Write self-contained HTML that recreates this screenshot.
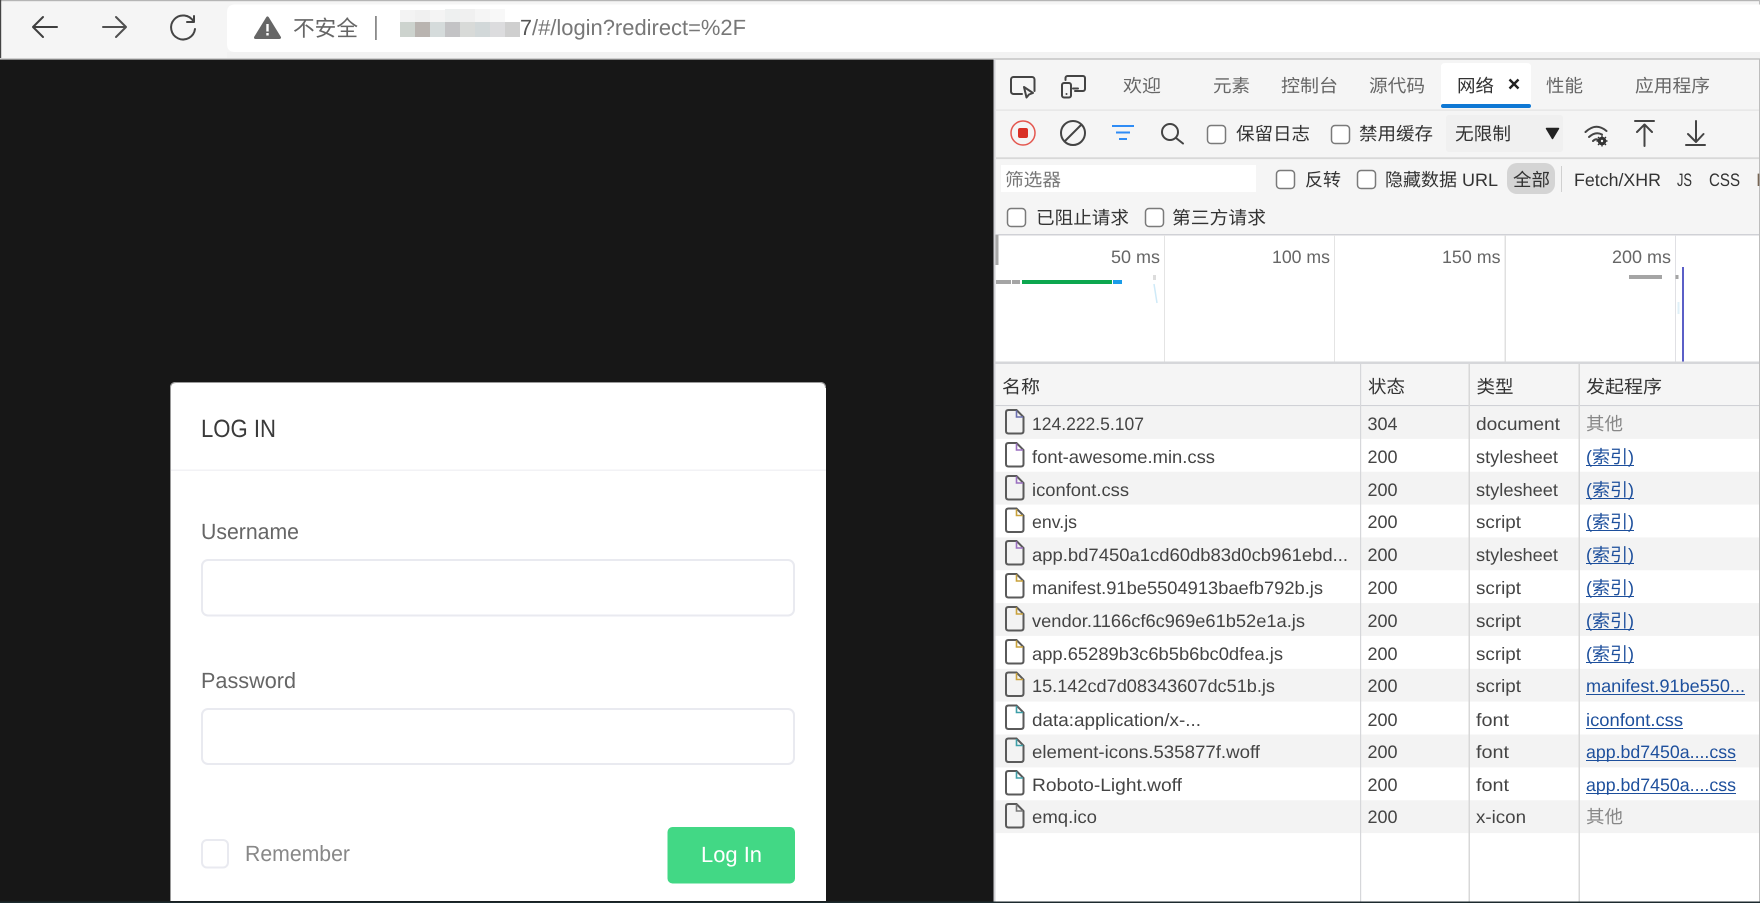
<!DOCTYPE html>
<html lang="zh">
<head>
<meta charset="utf-8">
<title>Login</title>
<style>
html,body{margin:0;padding:0;width:1760px;height:903px;overflow:hidden;background:#171717}
svg{display:block;filter:blur(.35px)}
text{font-family:"Liberation Sans","Noto Sans CJK SC",sans-serif;font-size:18px;fill:#444;text-rendering:geometricPrecision}
.t{fill:#666}
.d{fill:#333}
.g{fill:#777}
.l{fill:#1d4f9c}
.ic{fill:none;stroke:#444;stroke-width:2;stroke-linecap:round;stroke-linejoin:round}
.cb{fill:#fff;stroke:#7a7a7a;stroke-width:1.5}
.r{fill:#f3f3f3}
.v{fill:#d6d7da}
</style>
</head>
<body>
<svg width="1760" height="903" viewBox="0 0 1760 903" xmlns="http://www.w3.org/2000/svg">
<defs>
<path id="doc" d="M3.5 1H11.5L18.5 8V22Q18.5 24.5 16 24.5H3.5Q1 24.5 1 22V3.5Q1 1 3.5 1Z" fill="none" stroke="#5a5a5a" stroke-width="2"/>
<path id="fold" d="M11.5 1.5V8H18" fill="none" stroke-width="1.6"/>
</defs>

<!-- Page background -->
<rect width="1760" height="903" fill="#171717"/>

<!-- Browser bar -->
<rect x="0" y="0" width="1760" height="59" fill="#f5f5f5"/>
<rect x="0" y="0" width="1760" height="1.2" fill="#b5b5b5"/>
<rect x="0" y="0" width="1.2" height="59" fill="#444"/>
<rect x="1759" y="0" width="1" height="903" fill="#bdbdbd"/>
<path d="M235 4.5H1760V52H235Q227 52 227 44V12.5Q227 4.5 235 4.5Z" fill="#fff"/>
<rect x="227" y="52" width="1533" height="6" fill="#f2f2f2"/>
<rect x="0" y="58" width="1760" height="1.6" fill="#cfcfcf"/>

<path d="M57 27H33M43 17L33 27L43 37" fill="none" stroke="#3f3f3f" stroke-width="2" stroke-linecap="round" stroke-linejoin="round"/>
<path d="M103 27H126M116 17L126 27L116 37" fill="none" stroke="#505050" stroke-width="2" stroke-linecap="round" stroke-linejoin="round"/>
<path d="M193.5 21.5A12 12 0 1 0 195 29M194 16V22H187" fill="none" stroke="#444" stroke-width="2" stroke-linecap="round" stroke-linejoin="round"/>

<path d="M267.500 18L279.500 37.500H255.500Z" fill="#666" stroke="#666" stroke-width="3" stroke-linejoin="round"/>
<rect x="266.300" y="24" width="2.400" height="7.500" fill="#fff"/>
<rect x="266.300" y="33" width="2.400" height="2.500" fill="#fff"/>
<text x="293" y="36" style="font-size:22px" class="t" textLength="65" lengthAdjust="spacingAndGlyphs">不安全</text>
<rect x="375" y="16" width="1.800" height="24" fill="#8a8a8a"/>

<!-- Mosaic -->
<rect x="400" y="10" width="15" height="12" fill="#f3f3f3"/>
<rect x="415" y="10" width="15" height="12" fill="#f0f0f0"/>
<rect x="430" y="10" width="15" height="12" fill="#f4f4f4"/>
<rect x="445" y="9" width="15" height="13" fill="#eef0f0"/>
<rect x="460" y="9" width="15" height="13" fill="#f0f0f0"/>
<rect x="475" y="9" width="15" height="13" fill="#f5f5f5"/>
<rect x="490" y="9" width="15" height="13" fill="#f8f8f8"/>
<rect x="400" y="22" width="15" height="15" fill="#cdd3ce"/>
<rect x="415" y="22" width="15" height="15" fill="#b9b4b0"/>
<rect x="430" y="22" width="15" height="15" fill="#d5dbdb"/>
<rect x="445" y="22" width="15" height="15" fill="#c3c3c5"/>
<rect x="460" y="22" width="15" height="15" fill="#d8dad8"/>
<rect x="475" y="22" width="15" height="15" fill="#d2d8d9"/>
<rect x="490" y="22" width="15" height="15" fill="#dcdcde"/>
<rect x="505" y="22" width="15" height="15" fill="#cfcfcf"/>

<text x="520" y="35" style="font-size:22px;fill:#555" textLength="12" lengthAdjust="spacingAndGlyphs">7</text>
<text x="532" y="35" style="font-size:22px" class="g" textLength="214" lengthAdjust="spacingAndGlyphs">/#/login?redirect=%2F</text>

<!-- Login card -->
<path d="M176 382H820Q826 382 826 388V901H170V388Q170 382 176 382Z" fill="#fff"/>
<path d="M170.500 901V388Q170.500 382.500 176 382.500H820Q825.500 382.500 825.500 388" fill="none" stroke="#9a9a9a" stroke-width="1"/>
<rect x="171" y="469.500" width="655" height="1.500" fill="#f2f2f5"/>
<text x="201" y="437" style="font-size:25px;fill:#3a3a3a" textLength="75" lengthAdjust="spacingAndGlyphs">LOG IN</text>
<text x="201" y="539" style="font-size:22px" class="t" textLength="98" lengthAdjust="spacingAndGlyphs">Username</text>
<rect x="202" y="560" width="592" height="55.500" rx="6" fill="#fff" stroke="#e9eaf0" stroke-width="2"/>
<text x="201" y="688" style="font-size:22px" class="t" textLength="95" lengthAdjust="spacingAndGlyphs">Password</text>
<rect x="202" y="709" width="592" height="55" rx="6" fill="#fff" stroke="#e9eaf0" stroke-width="2"/>
<rect x="202" y="840" width="26" height="27.500" rx="5" fill="#fff" stroke="#e9eaf0" stroke-width="2"/>
<text x="245" y="861" style="font-size:22px;fill:#888" textLength="105" lengthAdjust="spacingAndGlyphs">Remember</text>
<rect x="667.500" y="827" width="127.500" height="56.500" rx="5" fill="#42d885"/>
<text x="701" y="862" style="font-size:22px;fill:#fff" textLength="61" lengthAdjust="spacingAndGlyphs">Log In</text>

<!-- DevTools panel -->
<rect x="994" y="59.600" width="766" height="843" fill="#f5f5f5"/>
<rect x="993.500" y="59" width="2" height="844" fill="#d2d2d6"/>
<rect x="1759" y="59" width="1" height="844" fill="#bdbdbd"/>

<!-- Tabs -->
<rect x="996" y="109.500" width="763" height="1.200" fill="#e2e2e2"/>
<path d="M1445 63H1527Q1531 63 1531 67V108H1441V67Q1441 63 1445 63Z" fill="#fff"/>
<rect x="1441" y="104" width="90" height="4" rx="2" fill="#0f78d4"/>

<path d="M1022 94H1013.500A2.500 2.500 0 0 1 1011 91.500V79.500A2.500 2.500 0 0 1 1013.500 77H1032A2.500 2.500 0 0 1 1034.500 79.500V91" class="ic"/>
<path d="M1024 87L1033 93L1029 94.500L1026.500 97.500Z" class="ic"/>
<path d="M1065.500 80V78A2 2 0 0 1 1067.500 76H1083A2 2 0 0 1 1085 78V89A2 2 0 0 1 1083 91H1075" class="ic"/>
<rect x="1062" y="83" width="9" height="14.500" rx="2" class="ic"/>
<circle cx="1066.500" cy="94" r="1" fill="#444"/>
<path d="M1073 88.500H1078" class="ic"/>

<text x="1123" y="92" class="t" textLength="38" lengthAdjust="spacingAndGlyphs">欢迎</text>
<text x="1213" y="92" class="t" textLength="37" lengthAdjust="spacingAndGlyphs">元素</text>
<text x="1281" y="92" class="t" textLength="57" lengthAdjust="spacingAndGlyphs">控制台</text>
<text x="1369" y="92" class="t" textLength="56" lengthAdjust="spacingAndGlyphs">源代码</text>
<text x="1457" y="92" class="d" textLength="37" lengthAdjust="spacingAndGlyphs">网络</text>
<path d="M1509.500 79.500L1518.500 88.500M1518.500 79.500L1509.500 88.500" fill="none" stroke="#222" stroke-width="2.400"/>
<text x="1546" y="92" class="t" textLength="37" lengthAdjust="spacingAndGlyphs">性能</text>
<text x="1635" y="92" class="t" textLength="75" lengthAdjust="spacingAndGlyphs">应用程序</text>

<!-- Toolbar -->
<circle cx="1023" cy="133" r="12" fill="none" stroke="#e4574f" stroke-width="1.500"/>
<rect x="1018" y="128" width="10" height="10" rx="2" fill="#d93025"/>
<circle cx="1073" cy="133" r="12" fill="none" stroke="#444" stroke-width="2"/>
<path d="M1065 141L1081 125" class="ic"/>
<path d="M1112 126H1134" stroke="#2f8cf5" stroke-width="2" fill="none"/>
<path d="M1116 132.500H1130" stroke="#2f8cf5" stroke-width="2" fill="none"/>
<path d="M1119 139H1127" stroke="#2f8cf5" stroke-width="2" fill="none"/>
<circle cx="1170" cy="132" r="8" class="ic"/>
<path d="M1176 138L1183 143.500" class="ic"/>

<rect x="1207.500" y="125.500" width="18" height="18" rx="3.500" class="cb"/>
<text x="1236" y="140" class="d" textLength="74" lengthAdjust="spacingAndGlyphs">保留日志</text>
<rect x="1331.500" y="125.500" width="18" height="18" rx="3.500" class="cb"/>
<text x="1359" y="140" class="d" textLength="74" lengthAdjust="spacingAndGlyphs">禁用缓存</text>
<rect x="1446" y="115" width="117" height="37" rx="3" fill="#f0f0f0"/>
<text x="1455" y="140" class="d" textLength="56" lengthAdjust="spacingAndGlyphs">无限制</text>
<path d="M1546.500 128.500H1558.500L1552.500 138.500Z" fill="#222" stroke="#222" stroke-width="1.500" stroke-linejoin="round"/>

<path d="M1585.500 132Q1596 122 1606.500 131M1589 137Q1595.500 131 1602 134.500M1593 141Q1595.500 138.500 1597.500 139.500" class="ic" stroke-width="1.800"/>
<circle cx="1602" cy="141" r="3" fill="none" stroke="#333" stroke-width="2.600"/>
<path d="M1602 135.500V146.500M1596.500 141H1607.500M1598 137L1606 145M1606 137L1598 145" stroke="#333" stroke-width="1.400" fill="none"/>
<circle cx="1602" cy="141" r="1.200" fill="#f5f5f5"/>

<path d="M1635 121H1654M1644.500 125V146M1637 132L1644.500 124.500L1652 132" class="ic" stroke-linecap="butt"/>
<path d="M1686 145H1705M1696 121V141M1688 134L1696 142L1703.500 134" class="ic" stroke-linecap="butt"/>

<rect x="996" y="157.300" width="763" height="1.800" fill="#d8d8d8"/>

<!-- Filter row -->
<rect x="1001" y="165" width="255" height="27" fill="#fff"/>
<text x="1005" y="186" style="fill:#777" textLength="56" lengthAdjust="spacingAndGlyphs">筛选器</text>
<rect x="1276.500" y="170.500" width="18" height="18" rx="3.500" class="cb"/>
<text x="1305" y="186" class="d" textLength="36" lengthAdjust="spacingAndGlyphs">反转</text>
<rect x="1357.500" y="170.500" width="18" height="18" rx="3.500" class="cb"/>
<text x="1385" y="186" class="d" textLength="113" lengthAdjust="spacingAndGlyphs">隐藏数据 URL</text>
<rect x="1507" y="163" width="48" height="31" rx="10" fill="#d4d4d4"/>
<text x="1513" y="186" class="d" textLength="37" lengthAdjust="spacingAndGlyphs">全部</text>
<rect x="1561" y="166" width="1" height="26" fill="#d0d0d0"/>
<text x="1574" y="186" class="d" textLength="87" lengthAdjust="spacingAndGlyphs">Fetch/XHR</text>
<text x="1677" y="186" class="d" textLength="15" lengthAdjust="spacingAndGlyphs">JS</text>
<text x="1709" y="186" class="d" textLength="31" lengthAdjust="spacingAndGlyphs">CSS</text>
<text x="1756" y="186" style="fill:#765">Img</text>

<rect x="1007.500" y="208.500" width="18" height="18" rx="3.500" class="cb"/>
<text x="1036" y="224" class="d" textLength="93" lengthAdjust="spacingAndGlyphs">已阻止请求</text>
<rect x="1145.500" y="208.500" width="18" height="18" rx="3.500" class="cb"/>
<text x="1172" y="224" class="d" textLength="94" lengthAdjust="spacingAndGlyphs">第三方请求</text>

<!-- Overview -->
<rect x="995.500" y="234" width="763.500" height="128" fill="#fff"/>
<rect x="995.500" y="234" width="763.500" height="1.500" fill="#d0d1d6"/>
<rect x="995.500" y="235" width="3" height="30" fill="#a8a8a8"/>
<rect x="1164" y="235" width="1" height="127" fill="#e4e4e4"/>
<rect x="1334" y="235" width="1" height="127" fill="#e4e4e4"/>
<rect x="1504.500" y="235" width="1.500" height="127" fill="#e0e0e0"/>
<rect x="1675" y="235" width="1" height="127" fill="#e0e0e4"/>
<text x="1111" y="263" class="t" textLength="49" lengthAdjust="spacingAndGlyphs">50 ms</text>
<text x="1272" y="263" class="t" textLength="58" lengthAdjust="spacingAndGlyphs">100 ms</text>
<text x="1442" y="263" class="t" textLength="58.500" lengthAdjust="spacingAndGlyphs">150 ms</text>
<text x="1612" y="263" class="t" textLength="59" lengthAdjust="spacingAndGlyphs">200 ms</text>
<rect x="996" y="280" width="15" height="4" fill="#a5a5a5"/>
<rect x="1012" y="280" width="8" height="4" fill="#a5a5a5"/>
<rect x="1022" y="280" width="90" height="4" fill="#0da74f"/>
<rect x="1113" y="280" width="9" height="4" fill="#1a9ce8"/>
<rect x="1153" y="275" width="3" height="5" fill="#dcdcdc"/>
<path d="M1154 284L1157 303" stroke="#cfeaf8" stroke-width="1.500" fill="none"/>
<rect x="1629" y="275" width="33" height="4" fill="#a5a5a5"/>
<rect x="1675.500" y="275" width="3" height="4" fill="#a5a5a5"/>
<rect x="1677.500" y="302" width="2" height="12" fill="#dff0f8"/>
<rect x="1682" y="267" width="2" height="95" fill="#5b5fc7"/>

<!-- Table header -->
<rect x="995.500" y="361.500" width="763.500" height="2.500" fill="#d6d7da"/>
<rect x="995.500" y="364" width="763.500" height="41" fill="#f5f5f5"/>
<rect x="995.500" y="405" width="763.500" height="1.200" fill="#d0d1d6"/>
<text x="1002" y="393" class="d" textLength="38" lengthAdjust="spacingAndGlyphs">名称</text>
<text x="1368" y="393" class="d" textLength="37" lengthAdjust="spacingAndGlyphs">状态</text>
<text x="1476.500" y="393" class="d" textLength="37" lengthAdjust="spacingAndGlyphs">类型</text>
<text x="1586" y="393" class="d" textLength="76" lengthAdjust="spacingAndGlyphs">发起程序</text>

<!-- Rows -->
<rect x="995.500" y="406.200" width="763.500" height="32.650" class="r"/>
<rect x="995.500" y="471.700" width="763.500" height="32.850" class="r"/>
<rect x="995.500" y="537.400" width="763.500" height="32.850" class="r"/>
<rect x="995.500" y="603.100" width="763.500" height="32.850" class="r"/>
<rect x="995.500" y="668.800" width="763.500" height="32.850" class="r"/>
<rect x="995.500" y="734.500" width="763.500" height="32.850" class="r"/>
<rect x="995.500" y="800.200" width="763.500" height="32.850" class="r"/>
<rect x="995.500" y="438.850" width="763.500" height="32.850" fill="#fff"/>
<rect x="995.500" y="504.550" width="763.500" height="32.850" fill="#fff"/>
<rect x="995.500" y="570.250" width="763.500" height="32.850" fill="#fff"/>
<rect x="995.500" y="635.950" width="763.500" height="32.850" fill="#fff"/>
<rect x="995.500" y="701.650" width="763.500" height="32.850" fill="#fff"/>
<rect x="995.500" y="767.350" width="763.500" height="32.850" fill="#fff"/>
<rect x="995.500" y="833.050" width="763.500" height="69" fill="#fff"/>

<rect x="1360" y="364" width="1.200" height="538" class="v"/>
<rect x="1468.500" y="364" width="1.500" height="538" fill="#d8d8d8"/>
<rect x="1578.500" y="364" width="1.500" height="538" fill="#d8d8d8"/>

<!-- File icons -->
<g transform="translate(1005,409)"><use href="#doc"/><use href="#fold" stroke="#6a6fb0"/></g>
<g transform="translate(1005,442)"><use href="#doc"/><use href="#fold" stroke="#9a6fc0"/></g>
<g transform="translate(1005,475)"><use href="#doc"/><use href="#fold" stroke="#9a6fc0"/></g>
<g transform="translate(1005,507.500)"><use href="#doc"/><use href="#fold" stroke="#c9a23c"/></g>
<g transform="translate(1005,540)"><use href="#doc"/><use href="#fold" stroke="#9a6fc0"/></g>
<g transform="translate(1005,573)"><use href="#doc"/><use href="#fold" stroke="#c9a23c"/></g>
<g transform="translate(1005,606)"><use href="#doc"/><use href="#fold" stroke="#c9a23c"/></g>
<g transform="translate(1005,639)"><use href="#doc"/><use href="#fold" stroke="#c9a23c"/></g>
<g transform="translate(1005,671.500)"><use href="#doc"/><use href="#fold" stroke="#c9a23c"/></g>
<g transform="translate(1005,704.500)"><use href="#doc"/><use href="#fold" stroke="#3f9fa8"/></g>
<g transform="translate(1005,737.500)"><use href="#doc"/><use href="#fold" stroke="#3f9fa8"/></g>
<g transform="translate(1005,770)"><use href="#doc"/><use href="#fold" stroke="#3f9fa8"/></g>
<g transform="translate(1005,803)"><use href="#doc"/><use href="#fold" stroke="#7a7a7a"/></g>

<!-- Names -->
<text x="1032" y="430" textLength="112" lengthAdjust="spacingAndGlyphs">124.222.5.107</text>
<text x="1032" y="463" textLength="183" lengthAdjust="spacingAndGlyphs">font-awesome.min.css</text>
<text x="1032" y="496" textLength="97" lengthAdjust="spacingAndGlyphs">iconfont.css</text>
<text x="1032" y="528" textLength="45" lengthAdjust="spacingAndGlyphs">env.js</text>
<text x="1032" y="561" textLength="316" lengthAdjust="spacingAndGlyphs">app.bd7450a1cd60db83d0cb961ebd...</text>
<text x="1032" y="594" textLength="291" lengthAdjust="spacingAndGlyphs">manifest.91be5504913baefb792b.js</text>
<text x="1032" y="627" textLength="273" lengthAdjust="spacingAndGlyphs">vendor.1166cf6c969e61b52e1a.js</text>
<text x="1032" y="660" textLength="251" lengthAdjust="spacingAndGlyphs">app.65289b3c6b5b6bc0dfea.js</text>
<text x="1032" y="692" textLength="243" lengthAdjust="spacingAndGlyphs">15.142cd7d08343607dc51b.js</text>
<text x="1032" y="726" textLength="169" lengthAdjust="spacingAndGlyphs">data:application/x-...</text>
<text x="1032" y="758" textLength="228" lengthAdjust="spacingAndGlyphs">element-icons.535877f.woff</text>
<text x="1032" y="791" textLength="150" lengthAdjust="spacingAndGlyphs">Roboto-Light.woff</text>
<text x="1032" y="823" textLength="65" lengthAdjust="spacingAndGlyphs">emq.ico</text>

<!-- Status -->
<text x="1367.500" y="430">304</text>
<text x="1367.500" y="463">200</text>
<text x="1367.500" y="496">200</text>
<text x="1367.500" y="528">200</text>
<text x="1367.500" y="561">200</text>
<text x="1367.500" y="594">200</text>
<text x="1367.500" y="627">200</text>
<text x="1367.500" y="660">200</text>
<text x="1367.500" y="692">200</text>
<text x="1367.500" y="726">200</text>
<text x="1367.500" y="758">200</text>
<text x="1367.500" y="791">200</text>
<text x="1367.500" y="823">200</text>

<!-- Type -->
<text x="1476" y="430" textLength="84" lengthAdjust="spacingAndGlyphs">document</text>
<text x="1476" y="463" textLength="82" lengthAdjust="spacingAndGlyphs">stylesheet</text>
<text x="1476" y="496" textLength="82" lengthAdjust="spacingAndGlyphs">stylesheet</text>
<text x="1476" y="528" textLength="45" lengthAdjust="spacingAndGlyphs">script</text>
<text x="1476" y="561" textLength="82" lengthAdjust="spacingAndGlyphs">stylesheet</text>
<text x="1476" y="594" textLength="45" lengthAdjust="spacingAndGlyphs">script</text>
<text x="1476" y="627" textLength="45" lengthAdjust="spacingAndGlyphs">script</text>
<text x="1476" y="660" textLength="45" lengthAdjust="spacingAndGlyphs">script</text>
<text x="1476" y="692" textLength="45" lengthAdjust="spacingAndGlyphs">script</text>
<text x="1476" y="726" textLength="33" lengthAdjust="spacingAndGlyphs">font</text>
<text x="1476" y="758" textLength="33" lengthAdjust="spacingAndGlyphs">font</text>
<text x="1476" y="791" textLength="33" lengthAdjust="spacingAndGlyphs">font</text>
<text x="1476" y="823" textLength="50" lengthAdjust="spacingAndGlyphs">x-icon</text>

<!-- Initiator -->
<text x="1586" y="430" style="fill:#888" textLength="37" lengthAdjust="spacingAndGlyphs">其他</text>
<text x="1586" y="463" class="l" textLength="48" lengthAdjust="spacingAndGlyphs">(索引)</text><rect x="1586" y="465" width="48" height="1" fill="#1d4f9c"/>
<text x="1586" y="496" class="l" textLength="48" lengthAdjust="spacingAndGlyphs">(索引)</text><rect x="1586" y="498" width="48" height="1" fill="#1d4f9c"/>
<text x="1586" y="528" class="l" textLength="48" lengthAdjust="spacingAndGlyphs">(索引)</text><rect x="1586" y="530" width="48" height="1" fill="#1d4f9c"/>
<text x="1586" y="561" class="l" textLength="48" lengthAdjust="spacingAndGlyphs">(索引)</text><rect x="1586" y="563" width="48" height="1" fill="#1d4f9c"/>
<text x="1586" y="594" class="l" textLength="48" lengthAdjust="spacingAndGlyphs">(索引)</text><rect x="1586" y="596" width="48" height="1" fill="#1d4f9c"/>
<text x="1586" y="627" class="l" textLength="48" lengthAdjust="spacingAndGlyphs">(索引)</text><rect x="1586" y="629" width="48" height="1" fill="#1d4f9c"/>
<text x="1586" y="660" class="l" textLength="48" lengthAdjust="spacingAndGlyphs">(索引)</text><rect x="1586" y="662" width="48" height="1" fill="#1d4f9c"/>
<text x="1586" y="692" class="l" textLength="159" lengthAdjust="spacingAndGlyphs">manifest.91be550...</text><rect x="1586" y="694" width="159" height="1" fill="#1d4f9c"/>
<text x="1586" y="726" class="l" textLength="97" lengthAdjust="spacingAndGlyphs">iconfont.css</text><rect x="1586" y="728" width="97" height="1" fill="#1d4f9c"/>
<text x="1586" y="758" class="l" textLength="150" lengthAdjust="spacingAndGlyphs">app.bd7450a....css</text><rect x="1586" y="760" width="150" height="1" fill="#1d4f9c"/>
<text x="1586" y="791" class="l" textLength="150" lengthAdjust="spacingAndGlyphs">app.bd7450a....css</text><rect x="1586" y="793" width="150" height="1" fill="#1d4f9c"/>
<text x="1586" y="823" style="fill:#888" textLength="37" lengthAdjust="spacingAndGlyphs">其他</text>

<!-- Bottom window edge -->
<rect x="0" y="901.500" width="1760" height="1.500" fill="#1c2a2e"/>
</svg>
</body>
</html>
